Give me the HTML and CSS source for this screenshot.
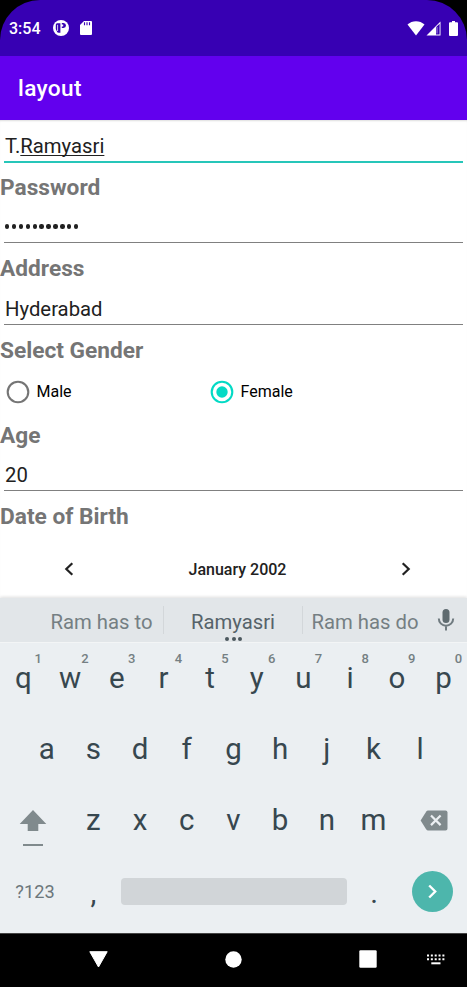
FILE: index.html
```html
<!DOCTYPE html>
<html lang="en">
<head>
<meta charset="utf-8">
<title>layout</title>
<link rel="stylesheet" href="styles.css">
</head>
<body>
<div class="phone">
  <div class="screen-top">
    <div class="status">
      <span class="clock">3:54</span>
      <svg class="st-app" width="16" height="16" viewBox="0 0 16 16"><circle cx="8" cy="8" r="8" fill="#fff"/><path d="M3.700 3.200H7.400V12.800H5.600A1.900 1.900 0 0 1 3.700 11L2.800 9V4.500z" fill="#3700b3"/><path d="M4.600 4.800V11" stroke="#fff" stroke-width=".8"/><path d="M8.800 3H10.500a2.600 2.600 0 0 1 2.500 2.500a2.600 2.600 0 0 1-2.500 2.500H8.800V6.500H10.200V4.500H8.800z" fill="#3700b3"/></svg>
      <svg class="st-sd" width="12" height="14" viewBox="0 0 12 14"><path d="M4 0h7a1 1 0 0 1 1 1v12a1 1 0 0 1-1 1H1a1 1 0 0 1-1-1V4z" fill="#fff"/><path d="M4.500 1.300v3M7 1.300v3M9.500 1.300v3" stroke="#3700b3" stroke-width="1.100"/></svg>
      <span class="grow"></span>
      <svg class="st-wifi" width="18" height="15" viewBox="0 0 18 15"><path d="M.5 3.600C5-1 13-1 17.500 3.600L9 14.500z" fill="#fff"/></svg>
      <svg class="st-cell" width="15" height="15" viewBox="0 0 15 15"><path d="M14.500 .5v14H.5z" fill="#fff"/><path d="M10 6.300L13.600 2.700V13.500H10z" fill="#3700b3"/><path d="M11 6V12.500" stroke="#c9b8ec" stroke-width=".8"/></svg>
      <svg class="st-batt" width="9" height="15" viewBox="0 0 9 15"><path d="M3 0h3v1.300h2a1 1 0 0 1 1 1V14a1 1 0 0 1-1 1H1a1 1 0 0 1-1-1V2.300a1 1 0 0 1 1-1h2z" fill="#fff"/></svg>
    </div>
    <header class="appbar">layout</header>
  </div>

  <main class="form">
    <div class="field focused">T.<span class="composing">Ramyasri</span></div>
    <div class="label first">Password</div>
    <div class="field"><span class="dots"><i></i><i></i><i></i><i></i><i></i><i></i><i></i><i></i><i></i><i></i><i></i></span></div>
    <div class="label">Address</div>
    <div class="field address">Hyderabad</div>
    <div class="label">Select Gender</div>
    <div class="radios">
      <div class="radio"><svg width="24" height="24" viewBox="0 0 24 24"><circle cx="12" cy="12" r="10.300" fill="none" stroke="#757575" stroke-width="2.100"/></svg>Male</div>
      <div class="radio"><svg width="24" height="24" viewBox="0 0 24 24"><circle cx="12" cy="12" r="10.300" fill="none" stroke="#03dac5" stroke-width="2.100"/><circle cx="12" cy="12" r="5.700" fill="#03dac5"/></svg>Female</div>
    </div>
    <div class="label">Age</div>
    <div class="field">20</div>
    <div class="label">Date of Birth</div>
    <div class="month">
      <svg width="10" height="14" viewBox="0 0 10 14"><path d="M8.300 1.200L2.300 7l6 5.800" fill="none" stroke="#212121" stroke-width="2.200"/></svg>
      <span>January 2002</span>
      <svg width="10" height="14" viewBox="0 0 10 14"><path d="M1.700 1.200l6 5.800l-6 5.800" fill="none" stroke="#212121" stroke-width="2.200"/></svg>
    </div>
  </main>

  <section class="keyboard">
    <div class="suggest">
      <span class="word left">Ram has to</span>
      <span class="word mid">Ramyasri<span class="more"><i></i><i></i><i></i></span></span>
      <span class="word right">Ram has do</span>
      <svg class="mic" width="18" height="24" viewBox="0 0 18 24"><rect x="5.500" y="1" width="7" height="14" rx="3.500" fill="#5f6b70"/><path d="M1.800 10.500a7.200 7.200 0 0 0 14.400 0M9 17.700V22.500" fill="none" stroke="#707b80" stroke-width="2"/></svg>
    </div>
    <div class="keys">
      <div class="row"><b>q<sup>1</sup></b><b>w<sup>2</sup></b><b>e<sup>3</sup></b><b>r<sup>4</sup></b><b>t<sup>5</sup></b><b>y<sup>6</sup></b><b>u<sup>7</sup></b><b>i<sup>8</sup></b><b>o<sup>9</sup></b><b>p<sup>0</sup></b></div>
      <div class="row inset"><b>a</b><b>s</b><b>d</b><b>f</b><b>g</b><b>h</b><b>j</b><b>k</b><b>l</b></div>
      <div class="row">
        <span class="wide shift"><svg width="28" height="38" viewBox="0 0 28 38"><path d="M14 0L27.300 14H19.300V21H8.700V14H.7z" fill="#808a8d"/><rect x="4" y="34" width="20" height="2" fill="#808a8d"/></svg></span>
        <b>z</b><b>x</b><b>c</b><b>v</b><b>b</b><b>n</b><b>m</b>
        <span class="wide erase"><svg width="28" height="21" viewBox="0 0 28 21"><path d="M8 .5H25.500a2 2 0 0 1 2 2V18.500a2 2 0 0 1-2 2H8Q7 20.500 6.300 19.500L.6 10.500L6.300 1.500Q7 .5 8 .5z" fill="#808a8d"/><path d="M11 5.500l9.600 9.600M20.600 5.500L11 15.100" stroke="#ebeff2" stroke-width="2.200"/></svg></span>
      </div>
      <div class="row">
        <span class="wide sym">?123</span>
        <b class="punct">,</b>
        <span class="space"></span>
        <b class="punct">.</b>
        <span class="wide enter"><svg width="41" height="41" viewBox="0 0 41 41"><circle cx="20.500" cy="20.500" r="20.500" fill="#4db6ac"/><path d="M17.200 14.500l6 6l-6 6" fill="none" stroke="#fff" stroke-width="2.400"/></svg></span>
      </div>
    </div>
  </section>

  <nav class="nav">
    <svg class="n-back" width="19" height="17" viewBox="0 0 19 17"><path d="M.8.700H18.200L9.500 16z" fill="#fff" stroke="#fff" stroke-linejoin="round"/></svg>
    <svg class="n-home" width="17" height="17" viewBox="0 0 17 17"><circle cx="8.500" cy="8.500" r="8.200" fill="#fff"/></svg>
    <svg class="n-recent" width="18" height="18" viewBox="0 0 18 18"><rect x=".3" y=".3" width="17.400" height="17.400" rx="1.200" fill="#fff"/></svg>
    <svg class="n-ime" width="18" height="11" viewBox="0 0 18 11"><path d="M0 1.500h18M0 5.200h18" stroke="#fff" stroke-width="2" stroke-dasharray="2 1.850"/><path d="M4.300 9.300h9.200" stroke="#fff" stroke-width="2"/></svg>
  </nav>
</div>
</body>
</html>
```

FILE: styles.css
```css
* { box-sizing: border-box; }
body { margin: 0; background: #fff; font-family: Roboto, sans-serif; }
svg { display: block; flex: none; }
.phone { width: 467px; height: 987px; display: flex; flex-direction: column; overflow: hidden; }

.screen-top { background: #000; flex: none; }
.status { height: 56px; background: #3700b3; border-radius: 40px 40px 0 0; display: flex; align-items: center; padding: 0 9px; color: #fff; }
.clock { font-size: 16px; font-weight: 500; width: 44px; line-height: 20px; padding-top: 2px; }
.st-sd { margin-left: 11px; }
.grow { flex: 1; }
.st-cell { margin-left: 1px; }
.st-batt { margin-left: 8px; }
.appbar { height: 63.500px; background: #6200ee; color: #fff; font-size: 22.700px; font-weight: 500; letter-spacing: .35px; line-height: 65px; padding-left: 18px; }

.form { height: 478px; flex: none; overflow: hidden; box-shadow: inset 0 2px 2px -1px #ddd; }
.field { margin: 0 4px; height: 43px; padding: 12px 1px 0; border-bottom: 1px solid #808080; font-size: 20.300px; line-height: 30px; color: #212121; }
.field.focused { height: 43px; padding-top: 11px; border-bottom: 2px solid #26c6b9; }
.field.address { height: 44px; padding-top: 13px; }
.composing { text-decoration: underline; text-decoration-thickness: 1px; text-underline-offset: 2px; text-decoration-skip-ink: none; }
.label { margin-top: 12px; height: 26px; line-height: 28px; font-size: 22.700px; font-weight: 700; color: #757575; }
.label.first { margin-top: 11px; }
.dots { display: flex; gap: 2.500px; height: 30px; align-items: center; }
.dots i { width: 4.400px; height: 4.400px; border-radius: 50%; background: #212121; }
.radios { display: flex; height: 47px; padding-top: 10px; }
.radio { display: flex; align-items: center; gap: 6.500px; width: 204px; height: 38px; padding-left: 6px; font-size: 16px; color: #000; }
.month { display: flex; justify-content: space-between; align-items: center; height: 81px; padding: 0 56px 0 64px; font-size: 16px; font-weight: 500; color: #212121; }

.keyboard { height: 335px; flex: none; background: #ebeff2; box-shadow: 0 -1px 3px #ddd; }
.suggest { height: 45.500px; background: #e2e6e9; border-bottom: 1px solid #f3f5f6; display: flex; align-items: center; font-size: 20.300px; color: #757f83; }
.word { height: 28px; line-height: 32px; text-align: center; }
.left { width: 164px; padding-left: 40px; border-right: 1px solid #d3d7da; }
.mid { width: 139px; border-right: 1px solid #d3d7da; color: #56636a; position: relative; }
.right { width: 124px; }
.more { position: absolute; left: 61px; top: 31px; display: flex; gap: 2.500px; }
.more i { width: 4px; height: 4px; border-radius: 50%; background: #4b585e; }
.mic { margin-left: 10px; }

.keys { color: #37474f; }
.row { height: 71px; display: flex; align-items: center; }
.inset { padding: 0 23.350px; }
.row b { width: 46.700px; flex: none; text-align: center; font-size: 29.500px; font-weight: 400; line-height: 71px; position: relative; }
.row sup { position: absolute; left: 34.300px; top: 6.500px; width: 8px; font-size: 13px; font-weight: 500; line-height: 18px; color: #757f83; }
.wide { width: 70px; flex: none; display: flex; justify-content: center; }
.shift { padding: 16px 4px 0 0; }
.erase { padding-left: 4px; }
.sym { font-size: 18.200px; color: #6c777c; }
.row .punct { font-size: 29.500px; padding-top: 4px; }
.space { width: 226px; height: 27px; margin: 0 4px; border-radius: 4px; background: #d1d5d8; flex: none; }
.enter { width: 70px; }

.nav { height: 54.500px; flex: none; background: #000; border-top: 1px solid #444; display: flex; align-items: center; padding: 0 0 2px 89px; }
.n-home { margin-left: 117px; }
.n-recent { margin-left: 117px; }
.n-ime { margin-left: 50px; }
```
